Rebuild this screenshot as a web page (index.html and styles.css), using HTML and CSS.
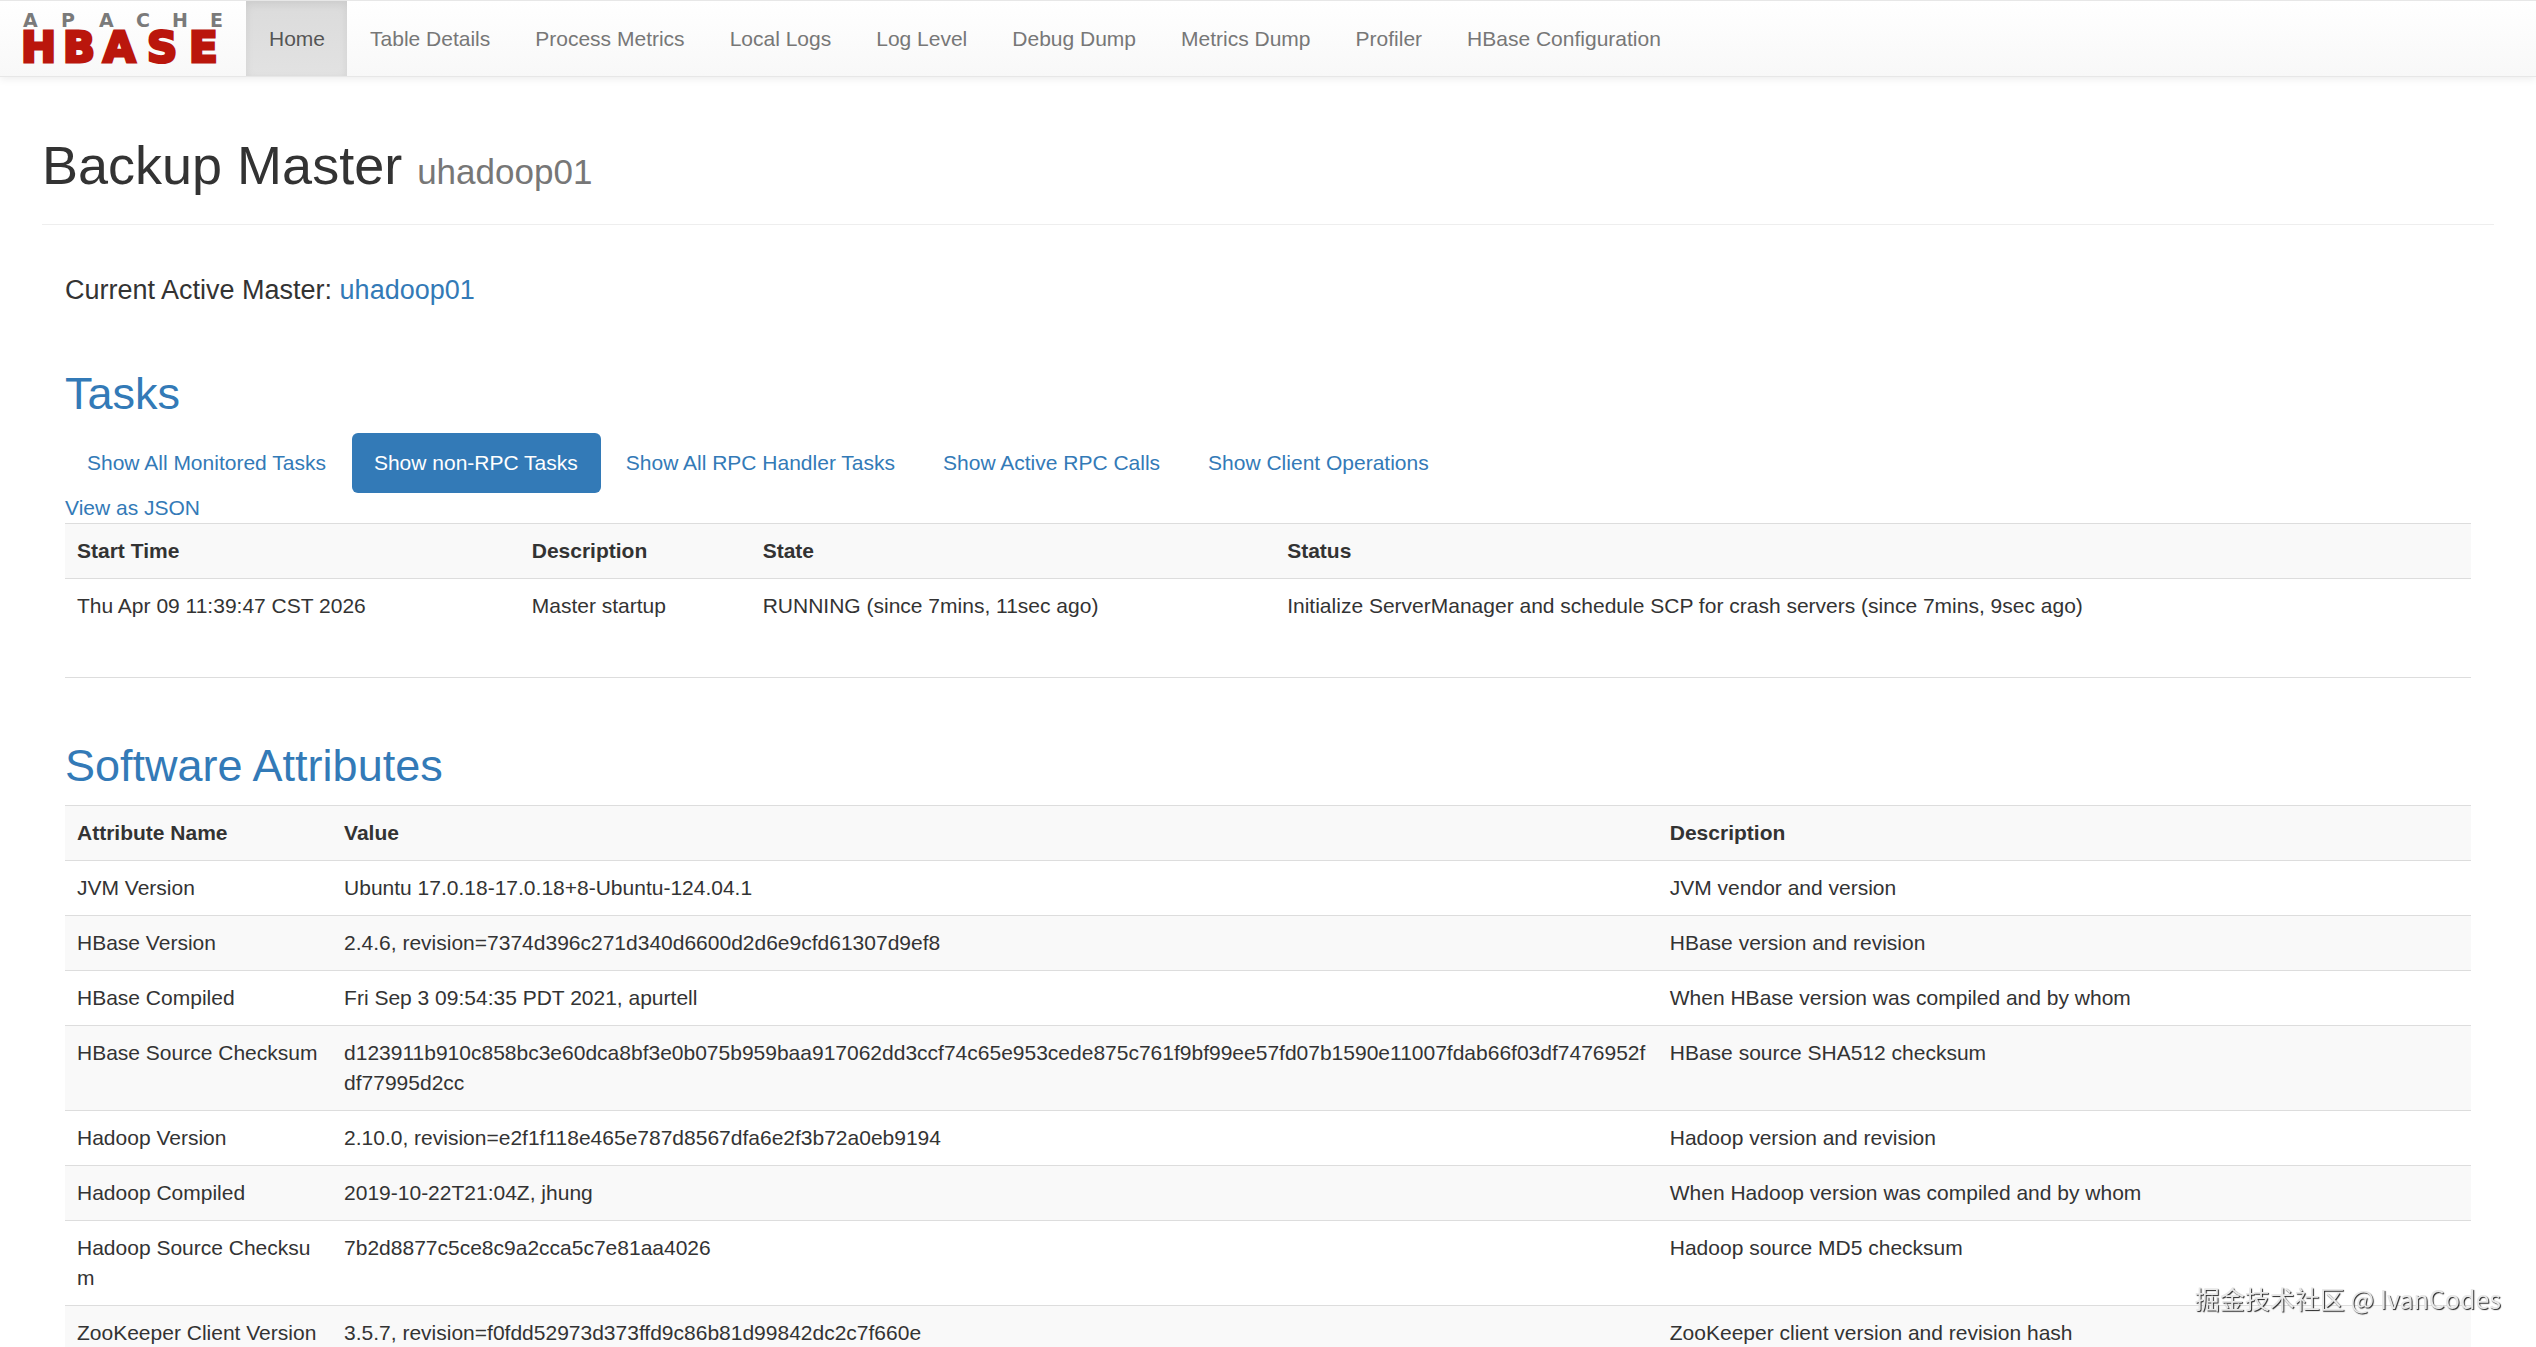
FILE: index.html
```
<!DOCTYPE html>
<html lang="en">

<head>
    <meta charset="UTF-8" />
    <meta name="viewport" content="width=device-width, initial-scale=1.0" />
    <title>Backup Master: uhadoop01</title>
    <link rel="stylesheet" href="styles.css">
</head>

<body>
    <!-- Navbar -->
    <nav class="navbar">
        <a class="brand" href="/master-status">
            <svg width="202" height="52" viewBox="0 0 202 52" role="img" aria-label="Apache HBase">
                <text class="logo-apache" x="0 38 76 113 149 187" y="14">APACHE</text>
                <text class="logo-hbase" x="-2 40 80 124 166" y="49">HBASE</text>
            </svg>
        </a>
        <ul class="nav">
            <li class="active"><a href="/">Home</a></li>
            <li><a href="/tablesDetailed.jsp">Table Details</a></li>
            <li><a href="/processMaster.jsp">Process Metrics</a></li>
            <li><a href="/logs/">Local Logs</a></li>
            <li><a href="/logLevel">Log Level</a></li>
            <li><a href="/dump">Debug Dump</a></li>
            <li><a href="/jmx">Metrics Dump</a></li>
            <li><a href="/prof">Profiler</a></li>
            <li><a href="/conf">HBase Configuration</a></li>
        </ul>
    </nav>

    <div class="container">
        <div class="page-header">
            <h1>Backup Master <small>uhadoop01</small></h1>
        </div>

        <section class="master">
            <h4>Current Active Master: <a href="//uhadoop01:16010/master-status">uhadoop01</a></h4>
        </section>

        <!-- Tasks -->
        <section class="tasks">
            <h2><a href="#tasks">Tasks</a></h2>
            <ul class="pills">
                <li><a href="?filter=all">Show All Monitored Tasks</a></li>
                <li class="active"><a href="?filter=general">Show non-RPC Tasks</a></li>
                <li><a href="?filter=handler">Show All RPC Handler Tasks</a></li>
                <li><a href="?filter=rpc">Show Active RPC Calls</a></li>
                <li><a href="?filter=operation">Show Client Operations</a></li>
            </ul>
            <a href="?format=json&amp;filter=general">View as JSON</a>
            <table class="table">
                <colgroup>
                    <col class="col-start">
                    <col class="col-task">
                    <col class="col-state">
                    <col>
                </colgroup>
                <tr>
                    <th>Start Time</th>
                    <th>Description</th>
                    <th>State</th>
                    <th>Status</th>
                </tr>
                <tr>
                    <td>Thu Apr 09 11:39:47 CST 2026</td>
                    <td>Master startup</td>
                    <td>RUNNING (since 7mins, 11sec ago)</td>
                    <td>Initialize ServerManager and schedule SCP for crash servers (since 7mins, 9sec ago)</td>
                </tr>
            </table>
        </section>

        <!-- Software attributes -->
        <section class="attributes">
            <h2><a href="#attributes">Software Attributes</a></h2>
            <table class="table">
                <colgroup>
                    <col class="col-name">
                    <col class="col-value">
                    <col>
                </colgroup>
                <tr>
                    <th>Attribute Name</th>
                    <th>Value</th>
                    <th>Description</th>
                </tr>
                <tr>
                    <td>JVM Version</td>
                    <td>Ubuntu 17.0.18-17.0.18+8-Ubuntu-124.04.1</td>
                    <td>JVM vendor and version</td>
                </tr>
                <tr>
                    <td>HBase Version</td>
                    <td>2.4.6, revision=7374d396c271d340d6600d2d6e9cfd61307d9ef8</td>
                    <td>HBase version and revision</td>
                </tr>
                <tr>
                    <td>HBase Compiled</td>
                    <td>Fri Sep 3 09:54:35 PDT 2021, apurtell</td>
                    <td>When HBase version was compiled and by whom</td>
                </tr>
                <tr>
                    <td>HBase Source Checksum</td>
                    <td>d123911b910c858bc3e60dca8bf3e0b075b959baa917062dd3ccf74c65e953cede875c761f9bf99ee57fd07b1590e11007fdab66f03df7476952fdf77995d2cc</td>
                    <td>HBase source SHA512 checksum</td>
                </tr>
                <tr>
                    <td>Hadoop Version</td>
                    <td>2.10.0, revision=e2f1f118e465e787d8567dfa6e2f3b72a0eb9194</td>
                    <td>Hadoop version and revision</td>
                </tr>
                <tr>
                    <td>Hadoop Compiled</td>
                    <td>2019-10-22T21:04Z, jhung</td>
                    <td>When Hadoop version was compiled and by whom</td>
                </tr>
                <tr>
                    <td>Hadoop Source Checksum</td>
                    <td>7b2d8877c5ce8c9a2cca5c7e81aa4026</td>
                    <td>Hadoop source MD5 checksum</td>
                </tr>
                <tr>
                    <td>ZooKeeper Client Version</td>
                    <td>3.5.7, revision=f0fdd52973d373ffd9c86b81d99842dc2c7f660e</td>
                    <td>ZooKeeper client version and revision hash</td>
                </tr>
            </table>
        </section>
    </div>

    <div class="watermark">掘金技术社区 @ IvanCodes</div>
</body>

</html>
```
FILE: styles.css
```
* {
    box-sizing: border-box;
}

body {
    margin: 0;
    font-family: "Helvetica Neue", Helvetica, Arial, "Liberation Sans", sans-serif;
    font-size: 21px;
    line-height: 30px;
    color: #333;
    background-color: #fff;
}

a {
    color: #337ab7;
    text-decoration: none;
}

a:hover {
    color: #23527c;
    text-decoration: underline;
}

ul {
    list-style: none;
    margin: 0;
    padding: 0;
}

/* Navbar */
.navbar {
    display: flex;
    border: 1px solid #e7e7e7;
    border-width: 1px 0;
    background-image: linear-gradient(to bottom, #fff 0%, #f8f8f8 100%);
    box-shadow: 0 2px 8px rgba(0, 0, 0, 0.075);
}

.brand {
    display: flex;
    align-items: center;
    padding: 0 21px 0 23px;
}

.brand svg {
    display: block;
    overflow: visible;
}

.logo-apache,
.logo-hbase {
    font-family: "DejaVu Sans", Verdana, sans-serif;
    font-weight: bold;
}

.logo-apache {
    font-size: 19px;
    fill: #7a7a7a;
}

.logo-hbase {
    font-size: 42px;
    fill: #ba160c;
    stroke: #ba160c;
    stroke-width: 3px;
}

.nav {
    display: flex;
}

.nav a {
    display: block;
    padding: 23px 22px 22px 23px;
    color: #777;
    text-shadow: 0 1px 0 rgba(255, 255, 255, 0.25);
}

.nav a:hover {
    color: #333;
    text-decoration: none;
}

.nav .active a {
    color: #555;
    background-image: linear-gradient(to bottom, #dbdbdb 0%, #e2e2e2 100%);
    box-shadow: inset 0 3px 9px rgba(0, 0, 0, 0.075);
}

/* Content */
.container {
    padding: 0 42px;
}

.page-header {
    margin: 58px 0 50px;
    padding-bottom: 29px;
    border-bottom: 1px solid #eee;
}

h1,
h2,
h4 {
    margin: 0;
    font-weight: 500;
}

h1 {
    font-size: 54px;
    line-height: 60px;
}

h1 small {
    font-size: 35px;
    font-weight: 400;
    line-height: 1;
    color: #777;
}

h2 {
    margin-bottom: 14px;
    font-size: 45px;
    line-height: 50px;
}

h4 {
    font-size: 27px;
    line-height: 30px;
}

section {
    margin: 0 23px;
}

.master {
    margin-bottom: 64px;
}

.tasks {
    margin-bottom: 63px;
    padding-bottom: 44px;
    border-bottom: 1px solid #ddd;
}

.pills {
    display: flex;
    gap: 3px;
}

.pills a {
    display: block;
    padding: 15px 23px 15px 22px;
    border-radius: 6px;
}

.pills .active a {
    color: #fff;
    background-color: #337ab7;
}

/* Tables */
.table {
    width: 100%;
    table-layout: fixed;
    border-collapse: collapse;
}

.table th,
.table td {
    padding: 12px;
    border-top: 1px solid #ddd;
    text-align: left;
    vertical-align: top;
    word-break: break-all;
}

.table tr:nth-child(odd) {
    background-color: #f9f9f9;
}

.col-start {
    width: 18.9%;
}

.col-task {
    width: 9.6%;
}

.col-state {
    width: 21.8%;
}

.col-name {
    width: 11.1%;
}

.col-value {
    width: 55.1%;
}

.watermark {
    position: fixed;
    right: 35px;
    bottom: 34px;
    font-family: "Noto Sans CJK SC", sans-serif;
    font-size: 25px;
    color: #e8e8e8;
    text-shadow: 1px 1px 1px #222;
}
```
